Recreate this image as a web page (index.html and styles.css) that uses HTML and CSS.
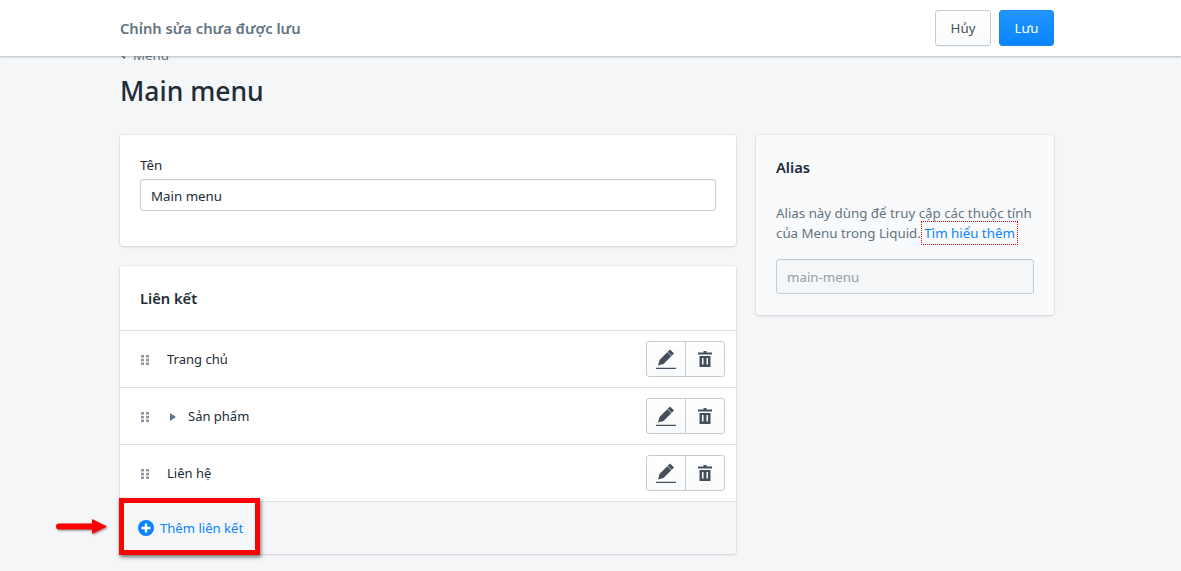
FILE: index.html
```html
<!DOCTYPE html>
<html lang="vi">
<head>
<meta charset="utf-8">
<title>Main menu</title>
<link rel="stylesheet" href="styles.css">
</head>
<body>
<header class="topbar">
  <div class="topbar-title">Chỉnh sửa chưa được lưu</div>
  <div class="topbar-actions">
    <button class="btn btn-default">Hủy</button>
    <button class="btn btn-primary">Lưu</button>
  </div>
</header>
<main class="page">
  <a class="crumb"><svg class="crumb-icon" viewBox="0 0 6 8"><path d="M5 .5 1.500 4 5 7.500" fill="none" stroke="#637381" stroke-width="1.800"/></svg>Menu</a>
  <h1 class="title">Main menu</h1>
  <div class="layout">
    <div class="col-main">
      <section class="card card-name">
        <label class="label">Tên</label>
        <input class="input input-name" value="Main menu">
      </section>
      <section class="card card-links">
        <h2 class="card-title links-title">Liên kết</h2>
        <div class="row">
          <svg class="grip" viewBox="0 0 8 10"><g fill="#8a96a3"><rect width="3" height="2.500"/><rect x="5" width="3" height="2.500"/><rect y="3.800" width="3" height="2.500"/><rect x="5" y="3.800" width="3" height="2.500"/><rect y="7.500" width="3" height="2.500"/><rect x="5" y="7.500" width="3" height="2.500"/></g></svg>
          <span class="row-name">Trang chủ</span>
          <div class="row-actions">
            <button class="icon-btn"><svg viewBox="0 0 20 20" class="icon-edit"><path d="M14 .5 18 4.500 7.500 15 2 16.500 3.500 11Z" fill="#454f5b"/><path d="M11.500 3 15.500 7" stroke="#fff" stroke-width=".7"/><path d="M0 19.500h20" stroke="#454f5b" stroke-width="1.500"/></svg></button>
            <button class="icon-btn"><svg viewBox="0 0 14 16" class="icon-trash"><path d="M5.500 0h3v1.500H14V3.500H0V1.500H5.500ZM1.500 5h11v11h-11ZM4 7v6.500h1.500V7ZM8.500 7v6.500H10V7Z" fill="#454f5b" fill-rule="evenodd"/></svg></button>
          </div>
        </div>
        <div class="row">
          <svg class="grip" viewBox="0 0 8 10"><g fill="#8a96a3"><rect width="3" height="2.500"/><rect x="5" width="3" height="2.500"/><rect y="3.800" width="3" height="2.500"/><rect x="5" y="3.800" width="3" height="2.500"/><rect y="7.500" width="3" height="2.500"/><rect x="5" y="7.500" width="3" height="2.500"/></g></svg>
          <svg class="caret" viewBox="0 0 6 8"><path d="M0 0 6 4 0 8Z" fill="#637381"/></svg>
          <span class="row-name">Sản phẩm</span>
          <div class="row-actions">
            <button class="icon-btn"><svg viewBox="0 0 20 20" class="icon-edit"><path d="M14 .5 18 4.500 7.500 15 2 16.500 3.500 11Z" fill="#454f5b"/><path d="M11.500 3 15.500 7" stroke="#fff" stroke-width=".7"/><path d="M0 19.500h20" stroke="#454f5b" stroke-width="1.500"/></svg></button>
            <button class="icon-btn"><svg viewBox="0 0 14 16" class="icon-trash"><path d="M5.500 0h3v1.500H14V3.500H0V1.500H5.500ZM1.500 5h11v11h-11ZM4 7v6.500h1.500V7ZM8.500 7v6.500H10V7Z" fill="#454f5b" fill-rule="evenodd"/></svg></button>
          </div>
        </div>
        <div class="row">
          <svg class="grip" viewBox="0 0 8 10"><g fill="#8a96a3"><rect width="3" height="2.500"/><rect x="5" width="3" height="2.500"/><rect y="3.800" width="3" height="2.500"/><rect x="5" y="3.800" width="3" height="2.500"/><rect y="7.500" width="3" height="2.500"/><rect x="5" y="7.500" width="3" height="2.500"/></g></svg>
          <span class="row-name">Liên hệ</span>
          <div class="row-actions">
            <button class="icon-btn"><svg viewBox="0 0 20 20" class="icon-edit"><path d="M14 .5 18 4.500 7.500 15 2 16.500 3.500 11Z" fill="#454f5b"/><path d="M11.500 3 15.500 7" stroke="#fff" stroke-width=".7"/><path d="M0 19.500h20" stroke="#454f5b" stroke-width="1.500"/></svg></button>
            <button class="icon-btn"><svg viewBox="0 0 14 16" class="icon-trash"><path d="M5.500 0h3v1.500H14V3.500H0V1.500H5.500ZM1.500 5h11v11h-11ZM4 7v6.500h1.500V7ZM8.500 7v6.500H10V7Z" fill="#454f5b" fill-rule="evenodd"/></svg></button>
          </div>
        </div>
        <div class="add-row">
          <svg class="plus" viewBox="0 0 16 16"><circle cx="8" cy="8" r="8" fill="#0a84ff"/><path d="M8 3.500v9M3.500 8h9" stroke="#fff" stroke-width="2.400"/></svg>
          <a class="link add-link">Thêm liên kết</a>
        </div>
      </section>
    </div>
    <aside class="card card-alias">
      <h2 class="card-title">Alias</h2>
      <p class="alias-text">Alias này dùng để truy cập các thuộc tính của Menu trong Liquid. <a class="link link-focus">Tìm hiểu thêm</a></p>
      <input class="input input-disabled" value="main-menu" disabled>
    </aside>
  </div>
</main>
<div class="callout"></div>
<svg class="arrow" viewBox="0 0 51 15"><path d="M3 4.500H36V0L51 7.500 36 15V10.500H3A3 3 0 0 1 3 4.500Z" fill="#f00"/></svg>
</body>
</html>
```
FILE: styles.css
```css
* { box-sizing: border-box; }
html, body { height: 100%; }
body {
  margin: 0;
  background: #f4f6f8;
  font-family: "Noto Sans", "Open Sans", sans-serif;
  font-size: 13.300px;
  line-height: 20px;
  color: #212b36;
  overflow: hidden;
  position: relative;
}
.topbar {
  position: absolute;
  top: 0; left: 0; right: 0;
  height: 56px;
  background: #fff;
  box-shadow: 0 1px 2px rgba(66,71,76,.35);
  display: flex;
  align-items: center;
  justify-content: space-between;
  padding: 0 127px 0 120px;
  z-index: 2;
}
.topbar-title { font-size: 14.700px; font-weight: 600; color: #637381; }
.topbar-actions { display: flex; gap: 8px; }
.btn {
  height: 36px;
  border-radius: 3px;
  font: inherit;
  padding: 0;
}
.btn-default {
  width: 56px;
  background: linear-gradient(#fff, #f9fafb);
  border: 1px solid #c4cdd5;
  color: #454f5b;
  box-shadow: 0 1px 0 rgba(22,29,37,.05);
}
.btn-primary {
  width: 55px;
  background: linear-gradient(#2196ff, #0a84ff);
  border: 1px solid #1a88f0;
  color: #fff;
}
.page { width: 934px; margin-left: 120px; padding-top: 45px; }
.crumb { display: flex; align-items: center; gap: 7px; color: #637381; height: 20px; }
.crumb-icon { width: 6px; height: 8px; }
.title { margin: 6px 0 0; font-size: 26.500px; line-height: 40px; font-weight: 500; height: 64px; }
.layout { display: flex; gap: 20px; align-items: flex-start; }
.col-main { width: 616px; display: flex; flex-direction: column; gap: 20px; }
.card {
  background: #fff;
  border-radius: 3px;
  box-shadow: 0 0 0 1px rgba(63,63,68,.05), 0 1px 3px rgba(63,63,68,.15);
}
.card-name { height: 111px; padding: 20px; }
.label { display: block; height: 24px; }
.input {
  display: block;
  width: 100%;
  height: 32px;
  padding: 0 10px;
  border: 1px solid #c4cdd5;
  border-radius: 3px;
  font: inherit;
  color: #212b36;
  background: #fff;
  box-shadow: inset 0 1px 0 rgba(99,115,129,.05);
}
.input-name { padding-top: 2px; }
.card-title { margin: 0; font-size: 14.700px; line-height: 24px; font-weight: 600; }
.links-title { height: 64px; padding: 20px 20px 0; }
.row {
  height: 57px;
  border-top: 1px solid #dfe3e8;
  display: flex;
  align-items: center;
  padding: 0 11px 0 21px;
}
.grip { width: 8px; height: 10px; margin-top: 2px; flex: none; }
.row-name { margin-left: 18px; font-size: 13px; }
.caret { width: 6px; height: 8px; margin-left: 21px; margin-right: -6px; margin-top: 1px; flex: none; }
.row-actions { margin-left: auto; display: flex; }
.icon-btn {
  width: 40px;
  height: 36px;
  padding: 0;
  background: linear-gradient(#fff, #f9fafb);
  border: 1px solid #c4cdd5;
  display: flex;
  align-items: center;
  justify-content: center;
}
.icon-btn:first-child { border-radius: 3px 0 0 3px; }
.icon-btn:last-child { border-radius: 0 3px 3px 0; margin-left: -1px; }
.icon-edit { width: 20px; height: 20px; }
.icon-trash { width: 14px; height: 16px; }
.add-row {
  height: 53px;
  background: #f4f6f8;
  border-top: 1px solid #dfe3e8;
  display: flex;
  align-items: center;
  gap: 6px;
  padding-left: 18px;
  border-radius: 0 0 3px 3px;
}
.plus { width: 16px; height: 16px; }
.link { color: #0a84ff; }
.add-link { font-size: 13.100px; }
.card-alias { width: 298px; height: 180px; padding: 20px 20px 0; background: #f9fafb; }
.alias-text { margin: 24px 0 0; color: #637381; }
.link-focus { outline: 1px dotted #f00; outline-offset: 2px; }
.input-disabled { width: 258px; height: 35px; margin-top: 16px; background: #f4f6f8; color: #919eab; }
.callout {
  position: absolute;
  left: 119px; top: 498px;
  width: 141px; height: 57px;
  border: 5px solid #f00;
  box-shadow: 1px 2px 4px rgba(0,0,0,.55);
  z-index: 3;
}
.arrow { position: absolute; left: 56px; top: 519px; width: 51px; height: 15px; filter: drop-shadow(1px 1px 1px rgba(0,0,0,.45)); z-index: 3; }
```
